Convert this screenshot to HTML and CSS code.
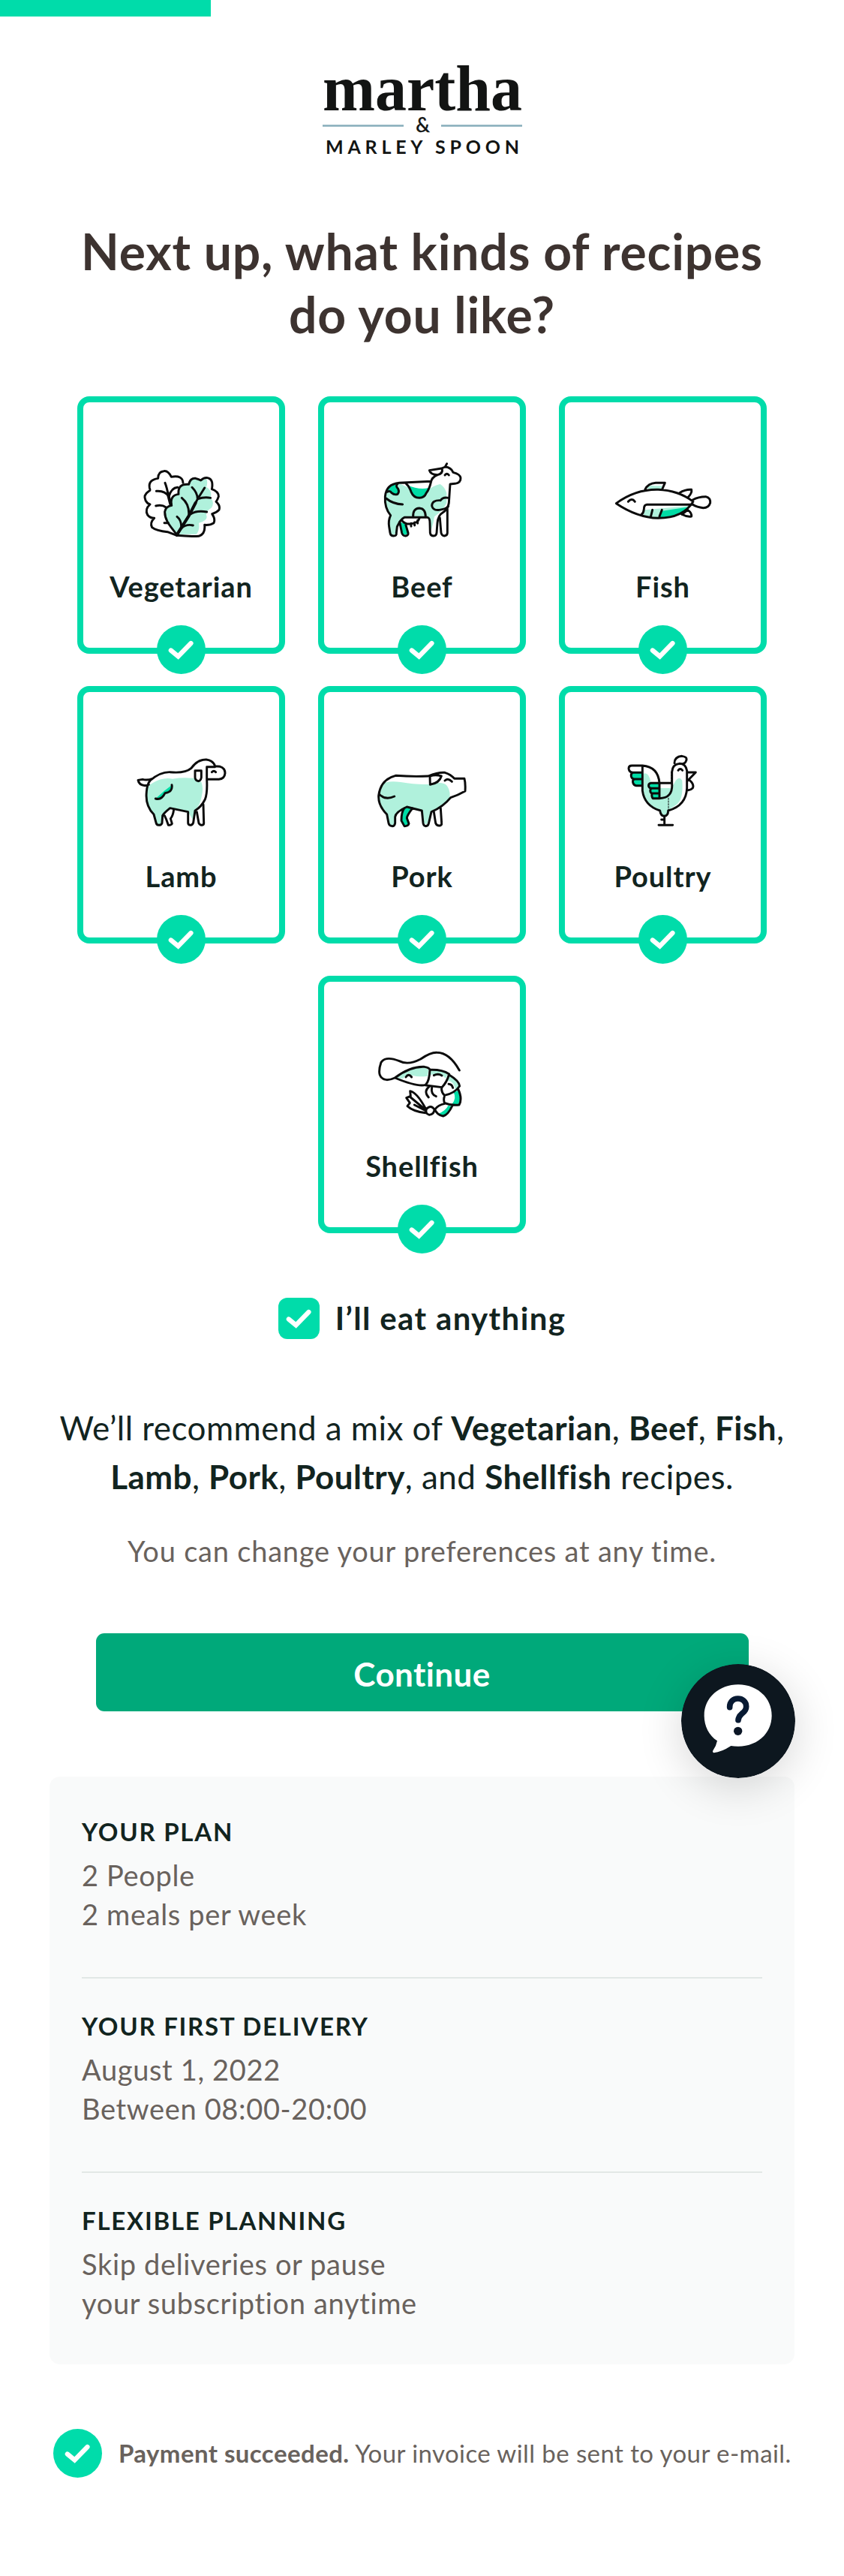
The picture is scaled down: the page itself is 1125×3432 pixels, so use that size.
FILE: index.html
```
<!doctype html>
<html>
<head>
<meta charset="utf-8">
<title>Martha &amp; Marley Spoon</title>
<link rel="stylesheet" href="styles.css">
</head>

<body>
<!-- shared check mark -->
<svg class="defs">
	<symbol id="check" viewBox="0 0 65 65"><path d="M18.8 33.5L28.5 41.5L45.5 24" fill="none" stroke="#fff" stroke-width="6.2" stroke-linecap="round"/></symbol>
</svg>

<div class="progress"></div>

<div class="logo">
	<svg width="270" height="160" viewBox="427 50 270 160">
		<text class="logo-top" x="429" y="147" textLength="266" lengthAdjust="spacingAndGlyphs">martha</text>
		<path d="M429 167.5H537M587 167.5H695" stroke="#86adba" stroke-width="2.4"/>
		<text class="logo-and" x="562.5" y="176">&amp;</text>
		<text class="logo-bottom" x="433" y="205" textLength="258">MARLEY SPOON</text>
	</svg>
</div>

<h1>Next up, what kinds of recipes<br>do you like?</h1>

<ul class="cards">
	<li>
		<svg class="icon" viewBox="240 288 432 360">
			<path class="light" d="M437 606C428 585 388 560 389 515Q392 495 416 490Q408 450 444 445Q442 405 485 406Q490 382 520 386Q545 390 556 384Q562 400 555 416Q580 430 572 460Q590 480 575 500Q550 515 556 532Q562 550 525 560Q530 590 515 605Z"/>
			<path d="M462 400Q460 368 415 376Q402 350 385 353Q362 355 362 382Q322 388 328 420C332 430 330 432 324 434Q302 448 312 470Q320 484 330 486Q308 505 320 528Q330 541 347 541Q328 560 338 578Q355 592 400 596L437 610"/>
			<path d="M437 610C430 590 388 560 389 515Q392 495 416 490Q408 450 444 445Q440 402 485 406Q490 380 512 382Q525 386 533 390Q545 378 560 380Q585 385 577 425Q605 435 604 455Q600 468 594 475Q612 490 606 508Q595 520 578 524Q592 545 585 560Q570 570 548 568Q552 605 525 613Q490 615 437 610Z"/>
			<path d="M437 610L485 530L520 465L548 420M457 460Q488 485 485 530M498 418Q520 440 520 465Q545 455 572 460M485 530Q510 508 557 516M438 535Q457 550 455 582Q475 563 502 570M390 400Q398 420 403 450L416 490M355 433Q390 430 405 455Q415 420 440 418M353 492Q378 486 394 498M387 560H403"/>
			<path class="thick" d="M437 608L485 532L512 480M403 450L412 485"/>
		</svg>
		<span>Vegetarian</span>
		<svg class="badge"><use href="#check"/></svg>
	</li>
	<li>
		<svg class="icon" viewBox="1201 288 432 360">
			<path class="light" d="M1325 402Q1272 405 1268 455Q1265 500 1290 530Q1280 555 1284 575L1288 600Q1300 615 1312 600L1316 570Q1330 545 1345 538H1440L1448 560L1452 590Q1462 560 1465 535Q1500 510 1514 480V440Q1505 415 1488 405Q1460 410 1440 430L1405 440Z"/>
			<path class="green" d="M1275 438Q1290 405 1318 404Q1310 415 1322 425Q1325 447 1305 447Q1295 445 1292 435ZM1354 408Q1366 420 1372 440Q1385 460 1405 460Q1425 455 1435 435L1442 420Q1405 430 1354 408ZM1326 556L1335 600Q1348 615 1360 600L1350 565Z"/>
			<path d="M1452 394L1325 400Q1272 405 1268 455Q1265 500 1290 530Q1280 550 1284 575L1288 600Q1290 612 1302 612Q1315 612 1313 600L1316 575Q1330 545 1345 538H1438Q1447 540 1447 560L1448 600Q1450 612 1462 612Q1473 612 1474 600L1477 560Q1480 530 1497 520Q1520 505 1523 480L1528 405L1548 403Q1571 400 1570 380Q1568 365 1540 358Q1532 338 1508 336L1494 342L1445 350Q1450 368 1478 368Q1455 378 1452 394Q1445 425 1433 440Q1425 460 1405 460Q1382 460 1372 436Q1365 415 1352 403M1496 345Q1500 362 1478 368M1508 336L1515 323M1507 369Q1516 358 1523 369"/>
			<path d="M1487 540L1492 600Q1495 612 1505 612Q1517 610 1517 600V505M1326 556L1335 600Q1338 612 1350 612Q1362 610 1360 600L1350 566M1335 550Q1350 570 1380 562Q1400 558 1405 542M1372 562V574M1386 558V570M1398 550V562M1380 536Q1378 502 1405 501Q1430 503 1430 536M1522 460Q1498 455 1490 470Q1455 468 1455 492Q1460 512 1485 508Q1510 505 1520 495M1272 462Q1300 485 1338 486M1276 436Q1288 430 1294 440Q1305 450 1318 445Q1326 435 1320 424Q1308 412 1318 404"/>
		</svg>
		<span>Beef</span>
		<svg class="badge"><use href="#check"/></svg>
	</li>
	<li>
		<svg class="icon" viewBox="754 288 432 360">
			<path class="light" d="M905 422Q912 408 935 412H966L960 426ZM897 508L1075 492Q1050 538 950 539Q910 538 890 530Z"/>
			<path class="green" d="M966 512L1075 496Q1045 536 950 539Z"/>
			<path d="M782 482Q860 425 950 427Q1030 430 1090 475Q1050 541 950 541Q865 538 782 482ZM1088 468Q1110 455 1140 455Q1160 460 1158 480Q1152 500 1130 500Q1105 498 1088 487M897 427Q910 402 940 400H977L965 428M1035 440Q1060 425 1083 427Q1086 440 1070 457M1045 526L1068 508Q1085 520 1083 534Q1065 537 1045 526M1090 487H905Q893 488 893 505Q892 520 882 528M927 508L921 532M965 508L955 534M830 475Q845 458 857 475"/>
		</svg>
		<span>Fish</span>
		<svg class="badge"><use href="#check"/></svg>
	</li>
	<li>
		<svg class="icon" viewBox="240 276 432 360">
			<path class="light" d="M340 430Q380 405 420 413Q470 405 510 412L535 425Q545 450 536 485Q530 520 508 540L500 575L482 545L410 530Q385 550 380 560L378 590Q365 605 354 588L345 555Q310 520 316 465Q320 440 340 430Z"/>
			<path class="green" d="M414 440Q420 465 390 470Q375 500 355 490Q385 460 414 440Z"/>
			<path d="M330 420Q370 385 410 386Q470 392 495 370Q520 335 555 336Q583 340 590 362L610 364Q630 370 630 390Q628 413 605 415H557Q560 470 550 495Q535 525 510 540L503 588Q500 598 490 598Q482 597 482 588V545L410 530Q385 550 380 560L378 590Q375 598 365 598Q355 597 354 588L345 555Q310 520 316 465Q318 435 330 420ZM340 412Q320 420 300 415L282 418Q285 438 310 440L325 436M557 415V365H590M510 380H535V408Q532 422 522 422Q511 420 510 408ZM577 386Q585 377 593 386"/>
			<path d="M425 535Q422 560 412 572L418 592Q415 598 403 598L395 575L388 560M517 545L525 590Q530 598 538 598Q546 596 545 588L543 515M417 437Q422 465 390 470Q375 500 352 492"/>
		</svg>
		<span>Lamb</span>
		<svg class="badge"><use href="#check"/></svg>
	</li>
	<li>
		<svg class="icon" viewBox="1201 276 432 360">
			<path class="light" d="M1258 432Q1280 420 1330 426Q1400 438 1450 434Q1500 422 1515 440Q1530 460 1526 488Q1500 525 1452 545L1435 595L1420 590L1415 540L1355 525Q1310 545 1308 565V590Q1296 605 1282 590L1275 555Q1240 520 1242 480Z"/>
			<path class="green" d="M1378 532Q1355 560 1355 570L1363 592Q1345 610 1335 585Q1330 555 1345 528Z"/>
			<path d="M1310 400Q1380 405 1440 402Q1480 386 1507 388Q1530 395 1545 412L1585 412Q1590 430 1588 462Q1560 478 1530 488Q1500 525 1453 545L1442 592Q1440 602 1430 602Q1422 600 1420 590L1415 540L1355 525Q1310 545 1308 565V590Q1306 602 1296 602Q1284 600 1282 590L1275 555Q1240 520 1242 480Q1250 415 1310 400ZM1245 475Q1270 500 1305 483M1447 402Q1470 394 1493 402Q1485 430 1448 436ZM1507 420Q1520 408 1535 424M1378 530Q1355 560 1355 570L1363 592Q1360 602 1345 602L1333 580Q1333 545 1345 530M1463 545L1470 590Q1475 602 1487 600Q1495 598 1494 590L1490 530"/>
		</svg>
		<span>Pork</span>
		<svg class="badge"><use href="#check"/></svg>
	</li>
	<li>
		<svg class="icon" viewBox="754 276 432 360">
			<path class="light" d="M891 392Q912 385 920 425L955 450H1002Q1010 440 1020 420Q1035 400 1046 420Q1052 500 1020 518L990 538Q985 560 975 560Q960 558 957 540Q893 520 889 460Z"/>
			<path class="green" d="M842 390H885V440H855L845 415ZM912 432H955V490H930L920 462Z"/>
			<path d="M887 360V460Q895 520 957 540Q960 562 975 562Q990 560 990 540Q1062 520 1065 450V380Q1060 352 1035 352Q1007 355 1005 385V430Q1010 490 955 491V430Q950 365 887 360ZM887 360H845Q832 360 832 372Q834 388 850 388H885M850 388Q840 390 842 403Q845 414 855 414H885M855 414Q847 416 849 428Q852 440 862 440H885M955 430H920Q910 432 912 443Q915 451 925 451H955M922 451Q914 462 923 471H955M926 471Q922 480 928 491H955M955 430H1003"/>
			<path d="M1015 350Q1015 325 1045 322Q1068 325 1062 340Q1060 350 1050 352M1068 387H1100L1068 420M1075 418Q1095 435 1088 450Q1078 460 1066 458M975 562V598M952 598H1008M963 576H975M1030 379Q1038 368 1047 379"/>
			<path class="dash" d="M991 490V540M1002 385V430"/>
		</svg>
		<span>Poultry</span>
		<svg class="badge"><use href="#check"/></svg>
	</li>
	<li>
		<svg class="icon" viewBox="271 263 432 360">
			<path class="light" d="M382 437Q440 392 495 395L512 405L508 430Q470 435 450 428Q420 425 410 440ZM517 408Q565 405 588 422L580 440Q560 415 520 425ZM594 430Q635 450 634 470L618 485Q615 450 588 448Z"/>
			<path class="green" d="M630 488Q645 520 630 543H605Q625 520 612 495ZM603 550Q590 585 570 588L548 582Q580 570 590 548Z"/>
			<path d="M635 407Q595 336 545 336Q520 335 480 362Q430 388 395 370Q340 348 322 375Q300 440 345 445Q360 445 377 437Q440 390 495 393Q515 396 517 405Q515 450 500 465Q470 475 377 437M517 405Q565 403 594 422Q585 455 565 475L502 467M594 425Q635 450 636 470Q615 500 575 507Q560 490 565 475M630 482Q648 520 634 545Q600 548 575 537Q570 520 577 507M607 548Q590 585 570 590Q545 585 537 563Q550 545 577 540"/>
			<path d="M503 562Q520 542 535 563Q535 582 515 585Q497 580 503 562ZM500 560Q465 495 438 490L440 510L423 517L437 537L427 550Q450 572 500 577M500 565L440 515M500 568L455 545M515 472Q490 490 512 515M525 475Q520 502 542 511M421 434Q432 418 444 434M533 427Q550 418 565 428M592 462Q605 462 609 477"/>
		</svg>
		<span>Shellfish</span>
		<svg class="badge"><use href="#check"/></svg>
	</li>
</ul>

<div class="anything">
	<svg class="box" viewBox="5 5 55 55"><use href="#check" width="65" height="65"/></svg>
	<span>I’ll eat anything</span>
</div>

<p class="mix">We’ll recommend a mix of <b>Vegetarian</b>, <b>Beef</b>, <b>Fish</b>,<br><b>Lamb</b>, <b>Pork</b>, <b>Poultry</b>, and <b>Shellfish</b> recipes.</p>
<p class="note">You can change your preferences at any time.</p>

<div class="action">
	<button>Continue</button>
	<svg class="chat" width="152" height="152" viewBox="84 82 456 456">
		<circle cx="312" cy="310" r="228" fill="#0d171f"/>
		<path d="M312 164C385 164 446 215 446 288C446 362 385 411 312 411Q295 411 283 409Q245 434 214 437Q208 434 211 428Q224 410 228 389C195 367 176 330 176 288C176 215 238 164 312 164Z" fill="#fff"/>
		<path d="M278 255C276 209 344 209 344 252C344 280 314 277 312 306" fill="none" stroke="#081a33" stroke-width="23" stroke-linecap="round"/>
		<circle cx="311" cy="350" r="17" fill="#0b1626"/>
	</svg>
</div>

<div class="panel">
	<div class="item">
		<h2>YOUR PLAN</h2>
		<p>2 People<br>2 meals per week</p>
	</div>
	<div class="item">
		<h2>YOUR FIRST DELIVERY</h2>
		<p>August 1, 2022<br>Between 08:00-20:00</p>
	</div>
	<div class="item">
		<h2>FLEXIBLE PLANNING</h2>
		<p>Skip deliveries or pause<br>your subscription anytime</p>
	</div>
</div>

<div class="paid">
	<svg class="round"><use href="#check"/></svg>
	<span><b>Payment succeeded.</b> Your invoice will be sent to your e-mail.</span>
</div>

</body>
</html>
```
FILE: styles.css
```
*{box-sizing:border-box;}
body{margin:0;width:1125px;height:3432px;background:#fff;color:#12241f;font-family:Lato,"Open Sans",sans-serif;overflow-x:hidden;}
ul,p,h1,h2{margin:0;padding:0;}
ul{list-style:none;}
svg{display:block;}
.defs{width:0;height:0;position:absolute;}

.progress{width:281px;height:22px;background:#00dcaa;}

.logo{display:flex;justify-content:center;padding-top:28px;}
.logo svg{overflow:visible;}
.logo text{fill:#121413;}
.logo-top{font:bold 87px "Liberation Serif",serif;}
.logo-and{font:400 26px Lato,sans-serif;text-anchor:middle;stroke:#121413;stroke-width:.5;}
.logo-bottom{font:700 25px Lato,sans-serif;}

h1{margin-top:83px;font-size:66px;line-height:84px;font-weight:700;letter-spacing:.8px;text-align:center;color:#3d3330;}

.cards{display:flex;flex-wrap:wrap;justify-content:center;gap:43px 44px;margin-top:67px;padding:0 60px;}
.cards li{position:relative;width:277px;height:343px;display:flex;flex-direction:column;align-items:center;
	border:8px solid #00dcaa;border-radius:16px;
}
.cards span{margin-top:32px;font-size:38px;line-height:46px;font-weight:700;letter-spacing:.9px;}
.icon{width:144px;height:120px;margin-top:70px;}
.icon path{fill:none;stroke:#0b0b0b;stroke-width:8.8;stroke-linecap:round;stroke-linejoin:round;}
.icon .light{fill:#b0f1dc;stroke:none;}
.icon .green{fill:#00dca5;stroke:none;}
.icon .thick{stroke-width:12;}
.icon .dash{stroke-width:3;stroke-dasharray:6 5;}
.badge{position:absolute;left:98px;bottom:-35px;width:65px;height:65px;border-radius:50%;background:#00dcaa;}

.anything{display:flex;justify-content:center;align-items:center;gap:21px;height:55px;margin-top:86px;}
.anything span{font-size:42px;line-height:50px;font-weight:700;letter-spacing:1.35px;padding-bottom:1px;}
.box{width:55px;height:55px;border-radius:12px;background:#00dcaa;}

.mix{margin-top:86px;font-size:44px;line-height:65px;letter-spacing:.45px;text-align:center;white-space:nowrap;}
.note{margin-top:43px;font-size:38px;line-height:46px;letter-spacing:.78px;text-align:center;color:#69625d;}

.action{position:relative;display:flex;justify-content:center;margin-top:87px;}
button{width:870px;height:104px;padding:3px 0 0;border:0;border-radius:11px;background:#00a97a;color:#fff;
	font:700 44px Lato,sans-serif;letter-spacing:.4px;
}
.chat{position:absolute;left:908px;top:41px;border-radius:50%;box-shadow:0 12px 60px rgba(0,0,0,.16);}

.panel{width:993px;height:783px;margin:87px 0 0 66px;padding:53px 43px 0;border-radius:14px;background:#f9fafa;}
.item{padding-bottom:58px;margin-bottom:43px;border-bottom:2px solid #e2e8e6;}
.item:last-child{border:0;margin:0;}
.item h2{font-size:33px;line-height:40px;font-weight:700;letter-spacing:1.75px;}
.item p{margin-top:12px;font-size:38px;line-height:52px;letter-spacing:.65px;color:#69625d;}

.paid{display:flex;align-items:center;gap:22px;margin:86px 0 0 71px;color:#69625d;white-space:nowrap;}
.paid span{font-size:33px;line-height:40px;letter-spacing:.42px;padding-bottom:2px;}
.round{flex:none;width:65px;height:65px;border-radius:50%;background:#00dcaa;}
```
